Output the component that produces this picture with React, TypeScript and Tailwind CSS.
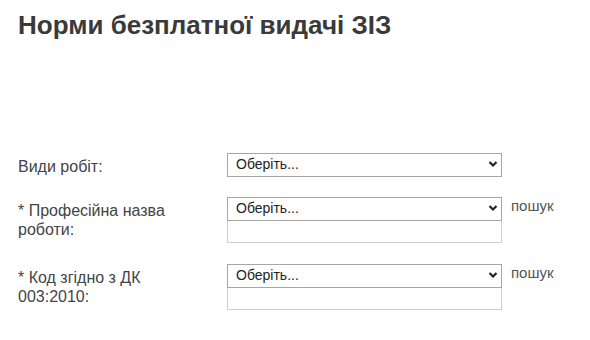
import React from 'react'

const Chevron = () => (
  <svg className="pointer-events-none absolute right-[4px] top-[8px]" width="10" height="8" viewBox="0 0 10 8">
    <path d="M1.5 2 L5 5.5 L8.5 2" fill="none" stroke="#222" strokeWidth="2.2" />
  </svg>
)

const Select = () => (
  <div className="relative w-[275px] h-[24px]">
    <select className="appearance-none w-full h-full border border-[#a6a6a6] bg-white pl-[8px] text-[14px] text-[#222] outline-none">
      <option>Оберіть...</option>
    </select>
    <Chevron />
  </div>
)

const Row = ({ label, search }: { label: React.ReactNode; search?: boolean }) => (
  <div className="flex items-start">
    <div className="w-[209px] pt-[5px] pr-4 text-[16px] leading-[19px] text-[#444]">{label}</div>
    <div className="flex flex-col">
      <Select />
      {search && <input className="w-[275px] h-[24px] -mt-px border border-[#cfcfcf] bg-white outline-none" />}
    </div>
    {search && <span className="ml-[9px] text-[15px] leading-[19px] text-[#555]">пошук</span>}
  </div>
)

export default function App() {
  return (
    <div className="w-[590px] h-[340px] bg-white pl-[18px] pt-[10px]" style={{ fontFamily: '"Liberation Sans", Arial, sans-serif' }}>
      <h1 className="text-[26px] font-bold leading-[30px] text-[#3a3a3a]">Норми безплатної видачі ЗІЗ</h1>
      <div className="mt-[112px] flex flex-col gap-[20px]">
        <Row label="Види робіт:" />
        <Row label={<>* Професійна назва<br />роботи:</>} search />
        <Row label={<>* Код згідно з ДК<br />003:2010:</>} search />
      </div>
    </div>
  )
}
